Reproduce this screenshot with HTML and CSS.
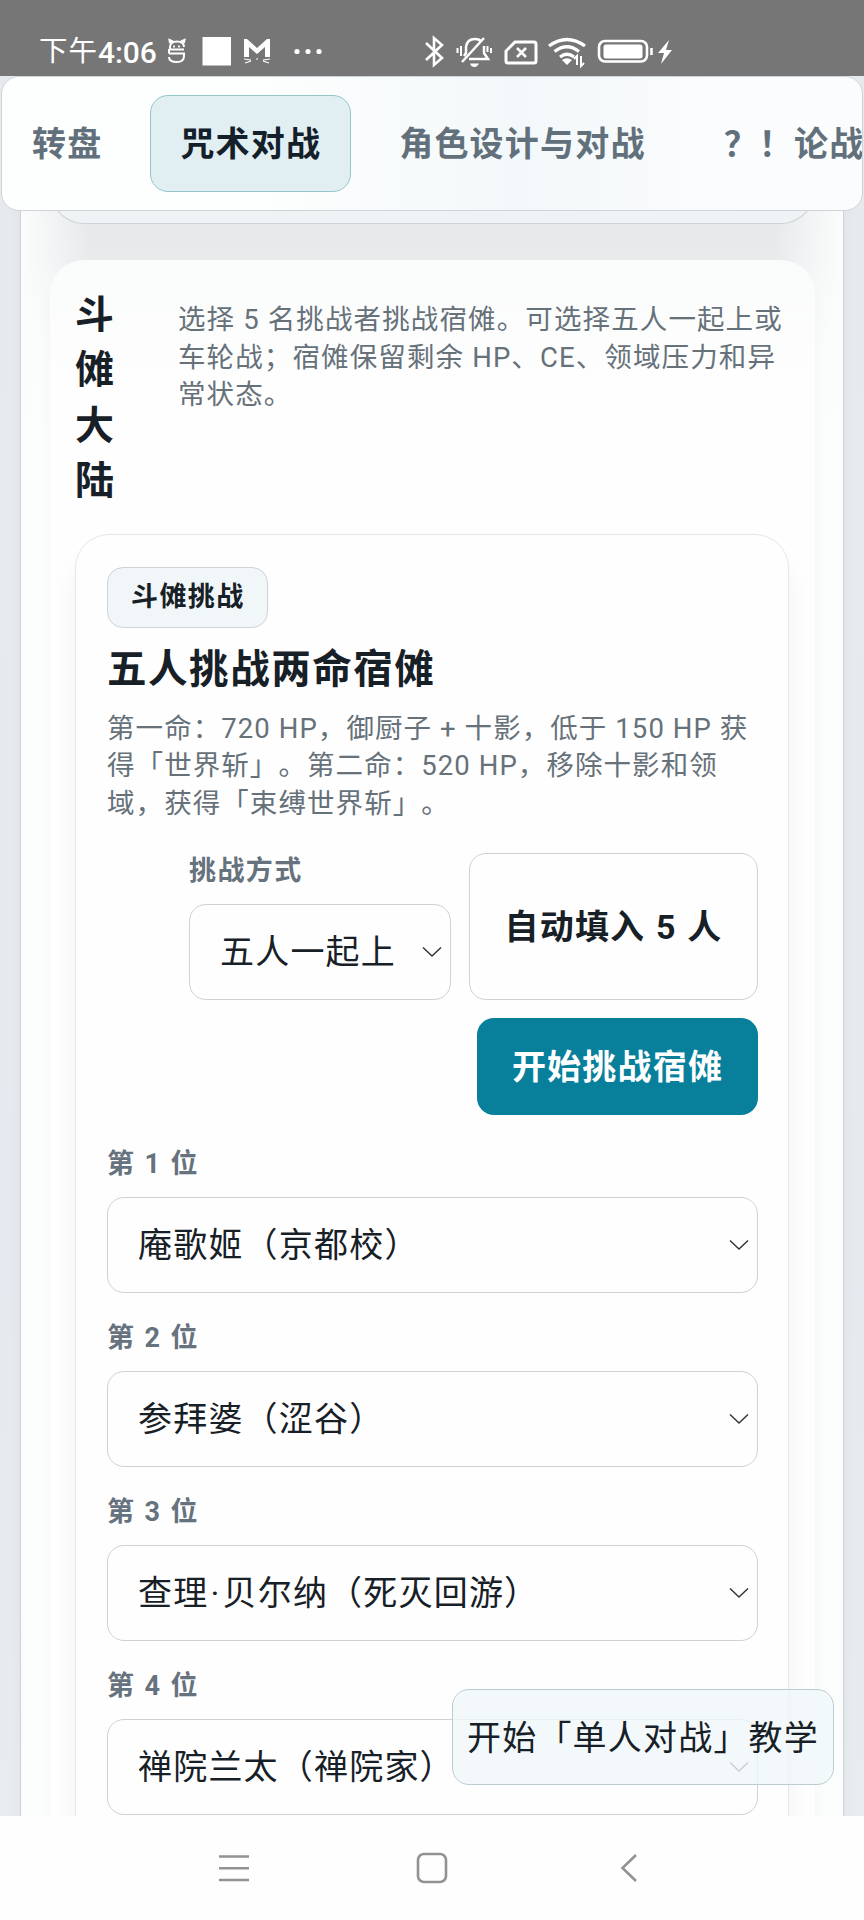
FILE: index.html
```html
<!DOCTYPE html>
<html lang="zh-CN">
<head>
<meta charset="utf-8">
<title>咒术对战</title>
<link rel="stylesheet" href="styles.css">
</head>
<body>
<header class="status">
  <span class="clock-cn">下午</span><span class="clock">4:06</span>
  <svg class="status-icons" width="700" height="40" viewBox="160 32 700 40" fill="none" stroke="#fff" stroke-width="2">
    <path d="M184 49.500H170V47Q170 41.500 177 41.500Q184 41.500 184 47M170 43L169.500 40L173 41.500M184 43L184.500 40L181 41.500M169 53.500H184V56Q184 62 177 62Q169 62 169 57M169 49V53.500"/>
    <path d="M174 45.500V47.500M179 45.500V47.500" stroke-width="1.800"/>
    <path d="M202.500 37H231V65.500H202.500Z" fill="#fff" stroke="none"/>
    <path d="M244 57V39H247L257 48L267 39H270V57H265V47L257 54L249 47V57Z" fill="#fff" stroke="none"/>
    <path d="M244 59L251 60M245 63L251 61M270 59L263 60M269 63L263 61M256 59H258" stroke-width="1.200"/>
    <g fill="#fff" stroke="none"><circle cx="297" cy="51.500" r="2.600"/><circle cx="308" cy="51.500" r="2.600"/><circle cx="319" cy="51.500" r="2.600"/></g>
    <path d="M426 43L442 58L434 65V38L442 45L426 60" stroke-width="2.600"/>
    <path d="M464 56L466 53V47Q467 39 475 39Q479 39 481 41M484 46V53L488 59H469M462 62L484 38" stroke-width="2.500"/>
    <path d="M470 63.500H479Q477 67 474.500 67Q471 67 470 63.500Z" fill="#fff" stroke="none"/>
    <path d="M457.500 48V53M461 46V56M491 48V53M487.500 46V52" stroke-width="2"/>
    <path d="M515 42H534Q536 42 536 44V61Q536 63 534 63H508Q506 63 506 61V51Z" stroke-width="3"/>
    <path d="M517 48L526 57M526 48L517 57" stroke-width="2.500"/>
    <path d="M549 46Q567 33 585 46M554.500 51.500Q567 42 579 51.500M560 57Q567 51.500 574 57" stroke-width="3.200"/>
    <path d="M562 60Q567 56.500 572 60L567 65Z" fill="#fff" stroke="none"/>
    <path d="M577 65V56L574 59M581 56V66L584 63" stroke-width="2"/>
    <rect x="599" y="41" width="48" height="20.500" rx="6" stroke-width="2.600"/>
    <rect x="603.500" y="44.500" width="39" height="14" rx="2.500" fill="#fff" stroke="none"/>
    <path d="M651.500 48V55" stroke-width="2.600"/>
    <path d="M669 40L658 53H664L661 64L672 50H666Z" fill="#fff" stroke="none"/>
  </svg>
</header>

<div class="viewport">
  <nav class="tabs">
    <a class="tab">转盘</a>
    <a class="tab active">咒术对战</a>
    <a class="tab">角色设计与对战</a>
    <a class="tab">？！论战</a>
  </nav>

  <main class="panel">
    <div class="previous-card"></div>
    <section class="section">
      <div class="section-head">
        <h2>斗傩大陆</h2>
        <p class="copy">选择 5 名挑战者挑战宿傩。可选择五人一起上或<br>车轮战；宿傩保留剩余 HP、CE、领域压力和异<br>常状态。</p>
      </div>
      <article class="card">
        <span class="chip">斗傩挑战</span>
        <h3>五人挑战两命宿傩</h3>
        <p class="copy">第一命：720 HP，御厨子 + 十影，低于 150 HP 获<br>得「世界斩」。第二命：520 HP，移除十影和领<br>域，获得「束缚世界斩」。</p>
        <div class="actions">
          <div class="field mode">
            <label>挑战方式</label>
            <div class="select">五人一起上<svg class="chevron" width="20" height="12" viewBox="0 0 20 12"><path d="M1 1.500L10 10L19 1.500"/></svg></div>
          </div>
          <button class="btn fill">自动填入 5 人</button>
          <button class="btn primary">开始挑战宿傩</button>
        </div>
        <div class="roster">
          <div class="field"><label>第 1 位</label><div class="select">庵歌姬（京都校）<svg class="chevron" width="20" height="12" viewBox="0 0 20 12"><path d="M1 1.500L10 10L19 1.500"/></svg></div></div>
          <div class="field"><label>第 2 位</label><div class="select">参拜婆（涩谷）<svg class="chevron" width="20" height="12" viewBox="0 0 20 12"><path d="M1 1.500L10 10L19 1.500"/></svg></div></div>
          <div class="field"><label>第 3 位</label><div class="select"><span>查理<span class="dot">·</span>贝尔纳（死灭回游）</span><svg class="chevron" width="20" height="12" viewBox="0 0 20 12"><path d="M1 1.500L10 10L19 1.500"/></svg></div></div>
          <div class="field"><label>第 4 位</label><div class="select">禅院兰太（禅院家）<svg class="chevron" width="20" height="12" viewBox="0 0 20 12"><path d="M1 1.500L10 10L19 1.500"/></svg></div></div>
        </div>
      </article>
    </section>
  </main>
  <button class="tutorial">开始「单人对战」教学</button>
</div>

<footer class="sysnav">
  <svg width="32" height="32" viewBox="0 0 32 32"><path d="M1 4.500H31M1 16.200H31M1 28H31"/></svg>
  <svg width="32" height="32" viewBox="0 0 32 32"><rect x="2" y="2" width="28" height="28" rx="6"/></svg>
  <svg width="32" height="32" viewBox="0 0 32 32"><path d="M22 3L8.500 16L22 29"/></svg>
</footer>
</body>
</html>
```
FILE: styles.css
```css
* { box-sizing: border-box; }

body {
  margin: 0;
  width: 864px;
  height: 1920px;
  overflow: hidden;
  display: flex;
  flex-direction: column;
  background: #fefefe;
  color: #172026;
  font-family: Roboto, "Noto Sans CJK SC", sans-serif;
  font-size: 34px;
  letter-spacing: 1.200px;
  text-spacing-trim: space-all;
}

h2, h3, p { margin: 0; }

button {
  font: inherit;
  letter-spacing: inherit;
  color: inherit;
  padding: 0;
}

.status {
  height: 76px;
  flex: none;
  display: flex;
  align-items: flex-start;
  background: #767676;
  color: #fff;
  padding: 32px 0 0 39px;
  line-height: 40px;
}

.clock-cn { font-size: 28.500px; letter-spacing: 1px; width: 59px; }
.clock { font-size: 30px; letter-spacing: -0.100px; font-weight: 500; width: 62px; padding-top: 1px; }
.status-icons { flex: none; }

.viewport {
  position: relative;
  height: 1740px;
  flex: none;
  overflow: hidden;
  background: linear-gradient(#e7eaed, #e6eaef 70%, #e8ecee);
}

.tabs {
  position: relative;
  z-index: 2;
  height: 135px;
  margin: 0 1px;
  display: flex;
  align-items: center;
  gap: 18px;
  overflow: hidden;
  border: 1px solid #ccd5d9;
  border-radius: 18px;
  background: linear-gradient(90deg, #fdfefe 0 30%, #f3f8fa 60%, #fbfcfd 85%);
  white-space: nowrap;
}

.tab {
  flex: none;
  height: 97px;
  padding: 1px 29px 0;
  border: 1px solid transparent;
  border-radius: 18px;
  color: #62707b;
  font-weight: 700;
  line-height: 95px;
}

.tab.active {
  color: #13202a;
  background: #e1eef2;
  border-color: #93c5c9;
}

.panel {
  height: 1640px;
  margin: -30px 20px 0 20px;
  padding: 30px 28px 0 29px;
  border: 1px solid #c9d3d9;
  border-top: 0;
  box-shadow: 0 0 10px rgba(100, 120, 140, .08);
  background:
    linear-gradient(90deg, #fbfdfd, rgba(251, 253, 253, 0) 70px, rgba(251, 253, 253, 0) calc(100% - 70px), #fbfdfd),
    linear-gradient(#e6e8ea 30px, #e9eaec 80px, #fbfcfc 160px, #fefefe 250px);
}

.previous-card {
  height: 43px;
  margin-top: -30px;
  border: 1px solid #ccd4d7;
  border-top: 0;
  border-radius: 0 0 34px 34px;
  background: #f0f3f5;
}

.section {
  height: 1600px;
  margin-top: 36px;
  padding: 26px 26px 0 25px;
  border-radius: 34px;
  background: linear-gradient(#fafbfb, #fefefe 130px);
  box-shadow: 0 20px 18px rgba(20, 30, 40, .035);
}

.section-head {
  display: flex;
  align-items: flex-start;
  gap: 63px;
}

h2 {
  width: 40px;
  padding-top: 2px;
  margin-bottom: -2px;
  font-size: 39px;
  font-weight: 700;
  line-height: 55.400px;
  letter-spacing: 0;
  overflow-wrap: anywhere;
}

.section-head .copy { padding-top: 15px; letter-spacing: 1.120px; }

.copy {
  color: #66717a;
  font-size: 27.500px;
  letter-spacing: 1.070px;
  line-height: 37.500px;
  white-space: nowrap;
}

.card {
  height: 1350px;
  margin-top: 26px;
  padding: 32px 30px 0 31px;
  border: 1px solid #e3e7e8;
  border-radius: 34px;
  background: #fefefe;
  box-shadow: 0 22px 26px rgba(20, 30, 40, .05);
}

.chip {
  display: block;
  width: 161px;
  height: 61px;
  padding-left: 23px;
  border: 1px solid #cdd3d6;
  border-radius: 16px;
  background: #f1f7f9;
  font-size: 27px;
  letter-spacing: 1.400px;
  font-weight: 700;
  line-height: 59px;
}

h3 {
  margin-top: 13px;
  font-size: 39.500px;
  font-weight: 700;
  line-height: 58px;
  letter-spacing: 1.550px;
}

.card > .copy { margin-top: 11px; }

.actions {
  display: flex;
  flex-wrap: wrap;
  justify-content: flex-end;
  gap: 18px;
  margin-top: 31px;
}

.field label {
  display: block;
  height: 36px;
  margin-bottom: 15px;
  color: #66727d;
  font-size: 27px;
  letter-spacing: 1.400px;
  font-weight: 700;
  line-height: 37px;
  word-spacing: 1px;
}

.mode { width: 262px; }

.select {
  height: 96px;
  padding: 0 8px 0 30px;
  display: flex;
  align-items: center;
  justify-content: space-between;
  border: 1px solid #ced2d4;
  border-radius: 17px;
  background: #fefefe;
  line-height: 94px;
  white-space: nowrap;
}

.dot { margin: 0 2px; }

.chevron { fill: none; stroke: #30363a; stroke-width: 1.500; }

.btn {
  padding-bottom: 4px;
  border: 1px solid #ced2d4;
  border-radius: 17px;
  background: #fefefe;
  font-weight: 700;
}

.fill { width: 289px; height: 147px; word-spacing: 1px; }

.primary {
  width: 281px;
  height: 97px;
  border: 0;
  background: #087f9b;
  color: #fff;
}

.roster {
  display: grid;
  gap: 27px;
  margin-top: 31px;
}

.tutorial {
  position: absolute;
  right: 30px;
  bottom: 31px;
  z-index: 3;
  width: 382px;
  height: 96px;
  padding-bottom: 4px;
  border: 1px solid #bccdd2;
  border-radius: 17px;
  background: rgba(240, 247, 249, .8);
  white-space: nowrap;
}

.sysnav {
  height: 104px;
  display: flex;
  justify-content: center;
  align-items: center;
  gap: 166px;
}

.sysnav svg { fill: none; stroke: #929292; stroke-width: 2.600; }
```
